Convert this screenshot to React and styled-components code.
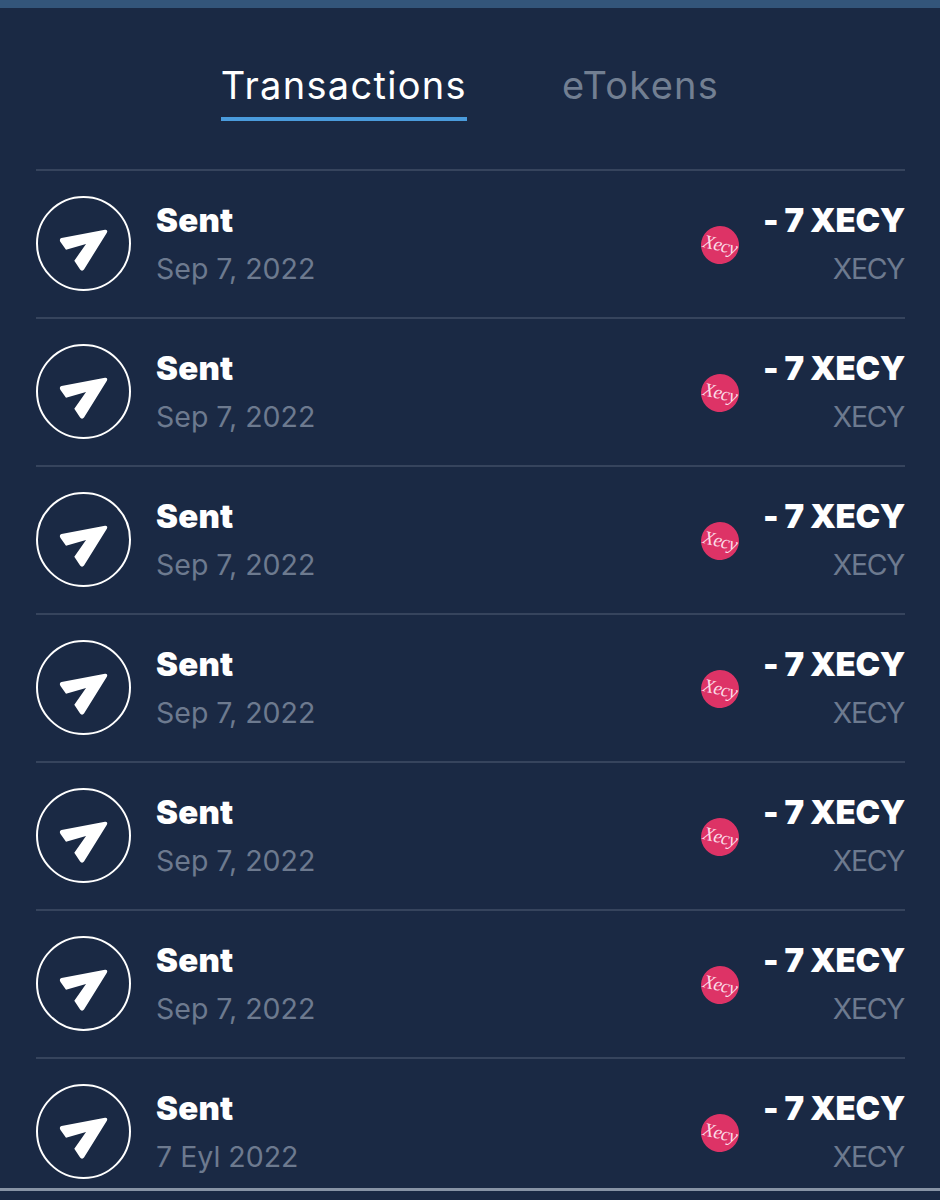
import React from 'react';
import styled, { createGlobalStyle } from 'styled-components';

const GlobalStyle = createGlobalStyle`
  html, body {
    margin: 0;
    padding: 0;
    background: #1a2944;
  }
  * {
    box-sizing: border-box;
  }
`;

const Page = styled.div`
  width: 940px;
  height: 1200px;
  overflow: hidden;
  display: flex;
  flex-direction: column;
  background: #1a2944;
  border-top: 8px solid #33557a;
  font-family: Inter, "Noto Sans", sans-serif;
`;

const Tabs = styled.div`
  flex: none;
  display: flex;
  justify-content: center;
  gap: 95px;
  height: 161px;
  padding-top: 54px;
`;

const Tab = styled.div`
  height: 59px;
  font-size: 38px;
  line-height: 46px;
  letter-spacing: 1.3px;
  color: ${(p) => (p.$active ? '#ffffff' : '#727f92')};
  border-bottom: 4px solid ${(p) => (p.$active ? '#4a9bdc' : 'transparent')};
`;

const List = styled.div`
  flex: 1;
  min-height: 0;
  overflow: hidden;
  margin: 0 35px 0 36px;
`;

const Row = styled.div`
  display: flex;
  align-items: center;
  height: 148px;
  padding-bottom: 2px;
  border-top: 2px solid #36445d;
`;

const SentCircle = styled.div`
  flex: none;
  width: 95px;
  height: 95px;
  display: flex;
  align-items: center;
  justify-content: center;
  border: 2px solid #ffffff;
  border-radius: 50%;
  svg {
    margin-top: 15px;
  }
`;

const Info = styled.div`
  flex: 1;
  margin-left: 25px;
  padding-top: 4px;
`;

const Title = styled.div`
  font-size: 33px;
  line-height: 48px;
  font-weight: 900;
  letter-spacing: 0.2px;
  color: #ffffff;
`;

const Sub = styled.div`
  font-size: 28.5px;
  line-height: 50px;
  color: #6d7a8f;
`;

const TokenLogo = styled.div`
  flex: none;
  width: 38px;
  height: 38px;
  margin: 4px 24px 0 0;
  display: flex;
  align-items: center;
  justify-content: center;
  border-radius: 50%;
  background: #dd3366;
  color: #fbdce6;
  font-family: "Liberation Serif", serif;
  font-style: italic;
  font-size: 19px;
  letter-spacing: -0.6px;
  transform: rotate(14deg);
  overflow: hidden;
`;

const Amount = styled.div`
  padding-top: 4px;
  text-align: right;
  ${Title} {
    letter-spacing: -0.35px;
  }
  ${Sub} {
    padding-right: 1px;
    letter-spacing: -1.4px;
  }
`;

const BottomBar = styled.div`
  flex: none;
  height: 12px;
  border-top: 3px solid #8793a5;
`;

const SendIcon = () => (
  <svg width="50" height="43" viewBox="0 0 50 43">
    <path
      d="M2.5 9 46 .7c1.8-.3 2.8 1.2 2 2.7L25 40.5c-1 1.6-3 1.5-3.9 0L15.3 31.7 27 15 7 20.7 1.5 13c-1.2-1.4-.6-3.6 1-4Z"
      fill="#ffffff"
    />
  </svg>
);

const rows = [
  'Sep 7, 2022',
  'Sep 7, 2022',
  'Sep 7, 2022',
  'Sep 7, 2022',
  'Sep 7, 2022',
  'Sep 7, 2022',
  '7 Eyl 2022',
];

const App = () => (
  <Page>
    <GlobalStyle />
    <Tabs>
      <Tab $active>Transactions</Tab>
      <Tab>eTokens</Tab>
    </Tabs>
    <List>
      {rows.map((date, i) => (
        <Row key={i}>
          <SentCircle>
            <SendIcon />
          </SentCircle>
          <Info>
            <Title>Sent</Title>
            <Sub>{date}</Sub>
          </Info>
          <TokenLogo>Xecy</TokenLogo>
          <Amount>
            <Title>- 7 XECY</Title>
            <Sub>XECY</Sub>
          </Amount>
        </Row>
      ))}
    </List>
    <BottomBar />
  </Page>
);

export default App;
